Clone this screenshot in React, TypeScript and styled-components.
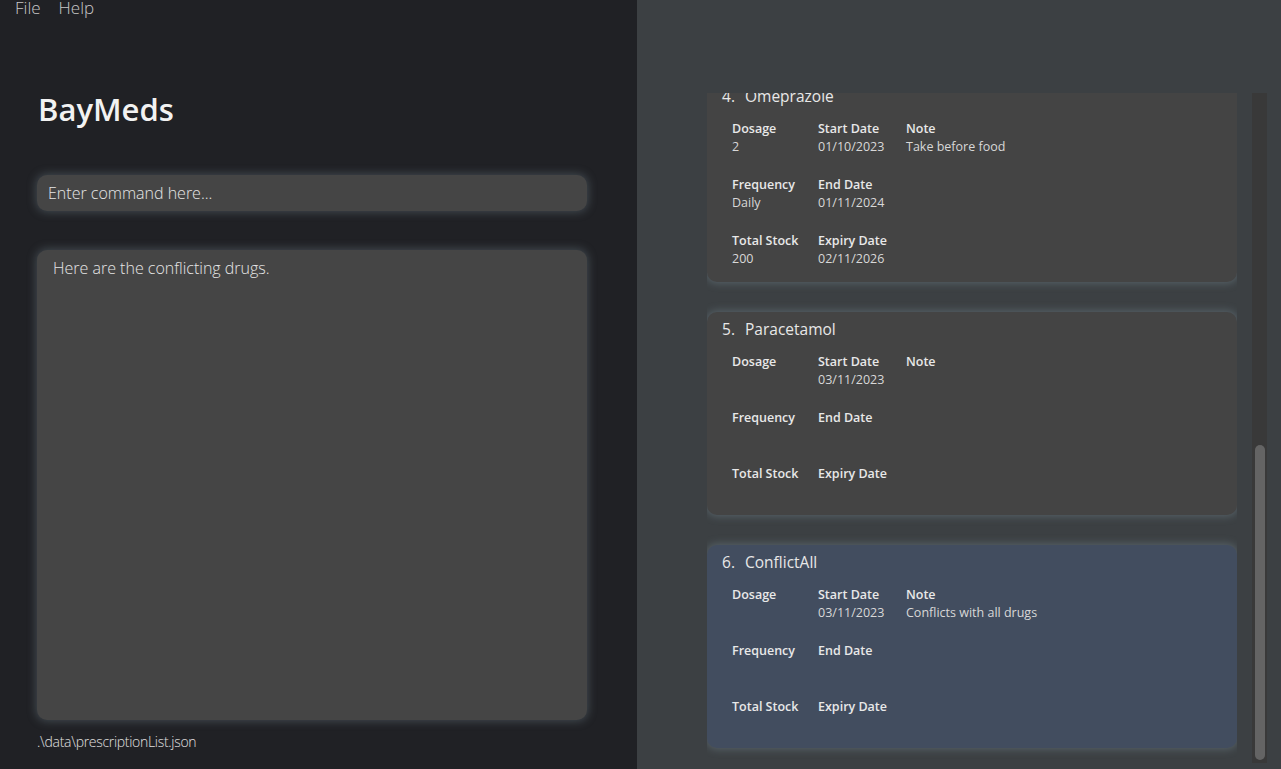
import styled, { createGlobalStyle } from "styled-components";

const GlobalStyle = createGlobalStyle`
    html, body {
        margin: 0;
        padding: 0;
        height: 100%;
        overflow: hidden;
    }
    body {
        font-family: "Open Sans", "Noto Sans", sans-serif;
        background: #202125;
    }
    #root {
        height: 100%;
    }
`;

type Prescription = {
    index: number;
    name: string;
    dosage?: string;
    frequency?: string;
    stock?: string;
    start?: string;
    end?: string;
    expiry?: string;
    note?: string;
    selected?: boolean;
};

const prescriptions: Prescription[] = [
    {
        index: 4,
        name: "Omeprazole",
        dosage: "2",
        frequency: "Daily",
        stock: "200",
        start: "01/10/2023",
        end: "01/11/2024",
        expiry: "02/11/2026",
        note: "Take before food",
    },
    { index: 5, name: "Paracetamol", start: "03/11/2023" },
    {
        index: 6,
        name: "ConflictAll",
        start: "03/11/2023",
        note: "Conflicts with all drugs",
        selected: true,
    },
];

// scroll position of the list, as fractions of the track
const thumbTop = 0.525;
const thumbHeight = 0.47;

function Field({ label, value }: { label: string; value?: string }) {
    return (
        <FieldBox>
            <FieldLabel>{label}</FieldLabel>
            <FieldValue>{value || "\u00a0"}</FieldValue>
        </FieldBox>
    );
}

function PrescriptionCard({ p, first }: { p: Prescription; first: boolean }) {
    return (
        <Card $selected={p.selected} $first={first}>
            <CardTitle>
                <CardIndex>{p.index}.</CardIndex>
                {p.name}
            </CardTitle>
            <FieldGrid>
                <Field label="Dosage" value={p.dosage} />
                <Field label="Start Date" value={p.start} />
                <Field label="Note" value={p.note} />
                <Field label="Frequency" value={p.frequency} />
                <Field label="End Date" value={p.end} />
                <div />
                <Field label="Total Stock" value={p.stock} />
                <Field label="Expiry Date" value={p.expiry} />
            </FieldGrid>
        </Card>
    );
}

function App() {
    return (
        <>
            <GlobalStyle />
            <Window>
                <LeftPane>
                    <MenuBar>
                        <MenuItem>File</MenuItem>
                        <MenuItem>Help</MenuItem>
                    </MenuBar>
                    <LeftContent>
                        <AppTitle>BayMeds</AppTitle>
                        <CommandBox>Enter command here...</CommandBox>
                        <ResultBox>Here are the conflicting drugs.</ResultBox>
                        <StatusText>.\data\prescriptionList.json</StatusText>
                    </LeftContent>
                </LeftPane>
                <RightPane>
                    <ListViewport>
                        <CardList>
                            {prescriptions.map((p, i) => (
                                <PrescriptionCard key={p.index} p={p} first={i === 0} />
                            ))}
                        </CardList>
                        <ScrollTrack>
                            <ScrollThumb
                                style={{
                                    top: `${thumbTop * 100}%`,
                                    height: `${thumbHeight * 100}%`,
                                }}
                            />
                        </ScrollTrack>
                    </ListViewport>
                </RightPane>
            </Window>
        </>
    );
}

const Window = styled.div`
    display: flex;
    height: 100vh;
    width: 100vw;
`;

const LeftPane = styled.div`
    width: 637px;
    flex-shrink: 0;
    background: #202125;
    display: flex;
    flex-direction: column;
`;

const MenuBar = styled.div`
    display: flex;
    gap: 18px;
    padding: 0 0 0 15px;
    height: 20px;
    align-items: center;
    margin-top: -3px;
`;

const MenuItem = styled.span`
    font-size: 17px;
    color: #c8c8c8;
    font-weight: 300;
`;

const LeftContent = styled.div`
    display: flex;
    flex-direction: column;
    padding: 0 50px 0 37px;
    flex: 1;
`;

const AppTitle = styled.h1`
    margin: 72px 0 0 1px;
    font-size: 31px;
    font-weight: 600;
    color: #f2f2f2;
    line-height: 40px;
`;

const glow = `0 0 10px 1px rgba(120, 140, 150, 0.4)`;

const CommandBox = styled.div`
    margin-top: 46px;
    height: 36px;
    border-radius: 10px;
    background: #454545;
    box-shadow: ${glow};
    color: #e6e6e6;
    font-size: 16px;
    font-weight: 300;
    display: flex;
    align-items: center;
    padding: 0 11px;
`;

const ResultBox = styled.div`
    margin-top: 39px;
    height: 470px;
    border-radius: 10px;
    background: #454545;
    box-shadow: ${glow};
    color: #e6e6e6;
    font-size: 16px;
    font-weight: 300;
    padding: 7px 16px;
    box-sizing: border-box;
`;

const StatusText = styled.div`
    margin-top: 12px;
    font-size: 14px;
    font-weight: 300;
    color: #e0e0e0;
    letter-spacing: -0.3px;
`;

const RightPane = styled.div`
    flex: 1;
    background: #3c4043;
    padding: 93px 14px 4px 70px;
    display: flex;
    box-sizing: border-box;
`;

const ListViewport = styled.div`
    flex: 1;
    display: flex;
    gap: 15px;
    overflow: hidden;
`;

const CardList = styled.div`
    flex: 1;
    display: flex;
    flex-direction: column;
    gap: 30px;
    overflow: hidden;
`;

const Card = styled.div<{ $selected?: boolean; $first?: boolean }>`
    flex-shrink: 0;
    height: 203px;
    box-sizing: border-box;
    margin-top: ${(p) => (p.$first ? "-14px" : "0")};
    border-radius: 10px;
    background: ${(p) => (p.$selected ? "#424d5f" : "#444444")};
    box-shadow: 0 0 8px 1px rgba(125, 145, 155, 0.45);
    padding: 4px 15px 0 15px;
`;

const CardTitle = styled.div`
    display: flex;
    font-size: 15.5px;
    color: #e8e8e8;
    line-height: 26px;
    font-weight: 400;
`;

const CardIndex = styled.span`
    width: 23px;
`;

const FieldGrid = styled.div`
    display: grid;
    grid-template-columns: 86px 88px 1fr;
    grid-auto-rows: 56px;
    padding: 11px 0 0 10px;
`;

const FieldBox = styled.div`
    display: flex;
    flex-direction: column;
`;

const FieldLabel = styled.div`
    font-size: 12.5px;
    font-weight: 600;
    color: #e8e8e8;
    line-height: 18px;
`;

const FieldValue = styled.div`
    font-size: 12.5px;
    color: #d8d8d8;
    line-height: 18px;
`;

const ScrollTrack = styled.div`
    width: 15px;
    flex-shrink: 0;
    background: #393939;
    position: relative;
    margin-bottom: 2px;
`;

const ScrollThumb = styled.div`
    position: absolute;
    left: 3px;
    right: 2px;
    background: #646464;
    border-radius: 5px;
`;

export default App;
